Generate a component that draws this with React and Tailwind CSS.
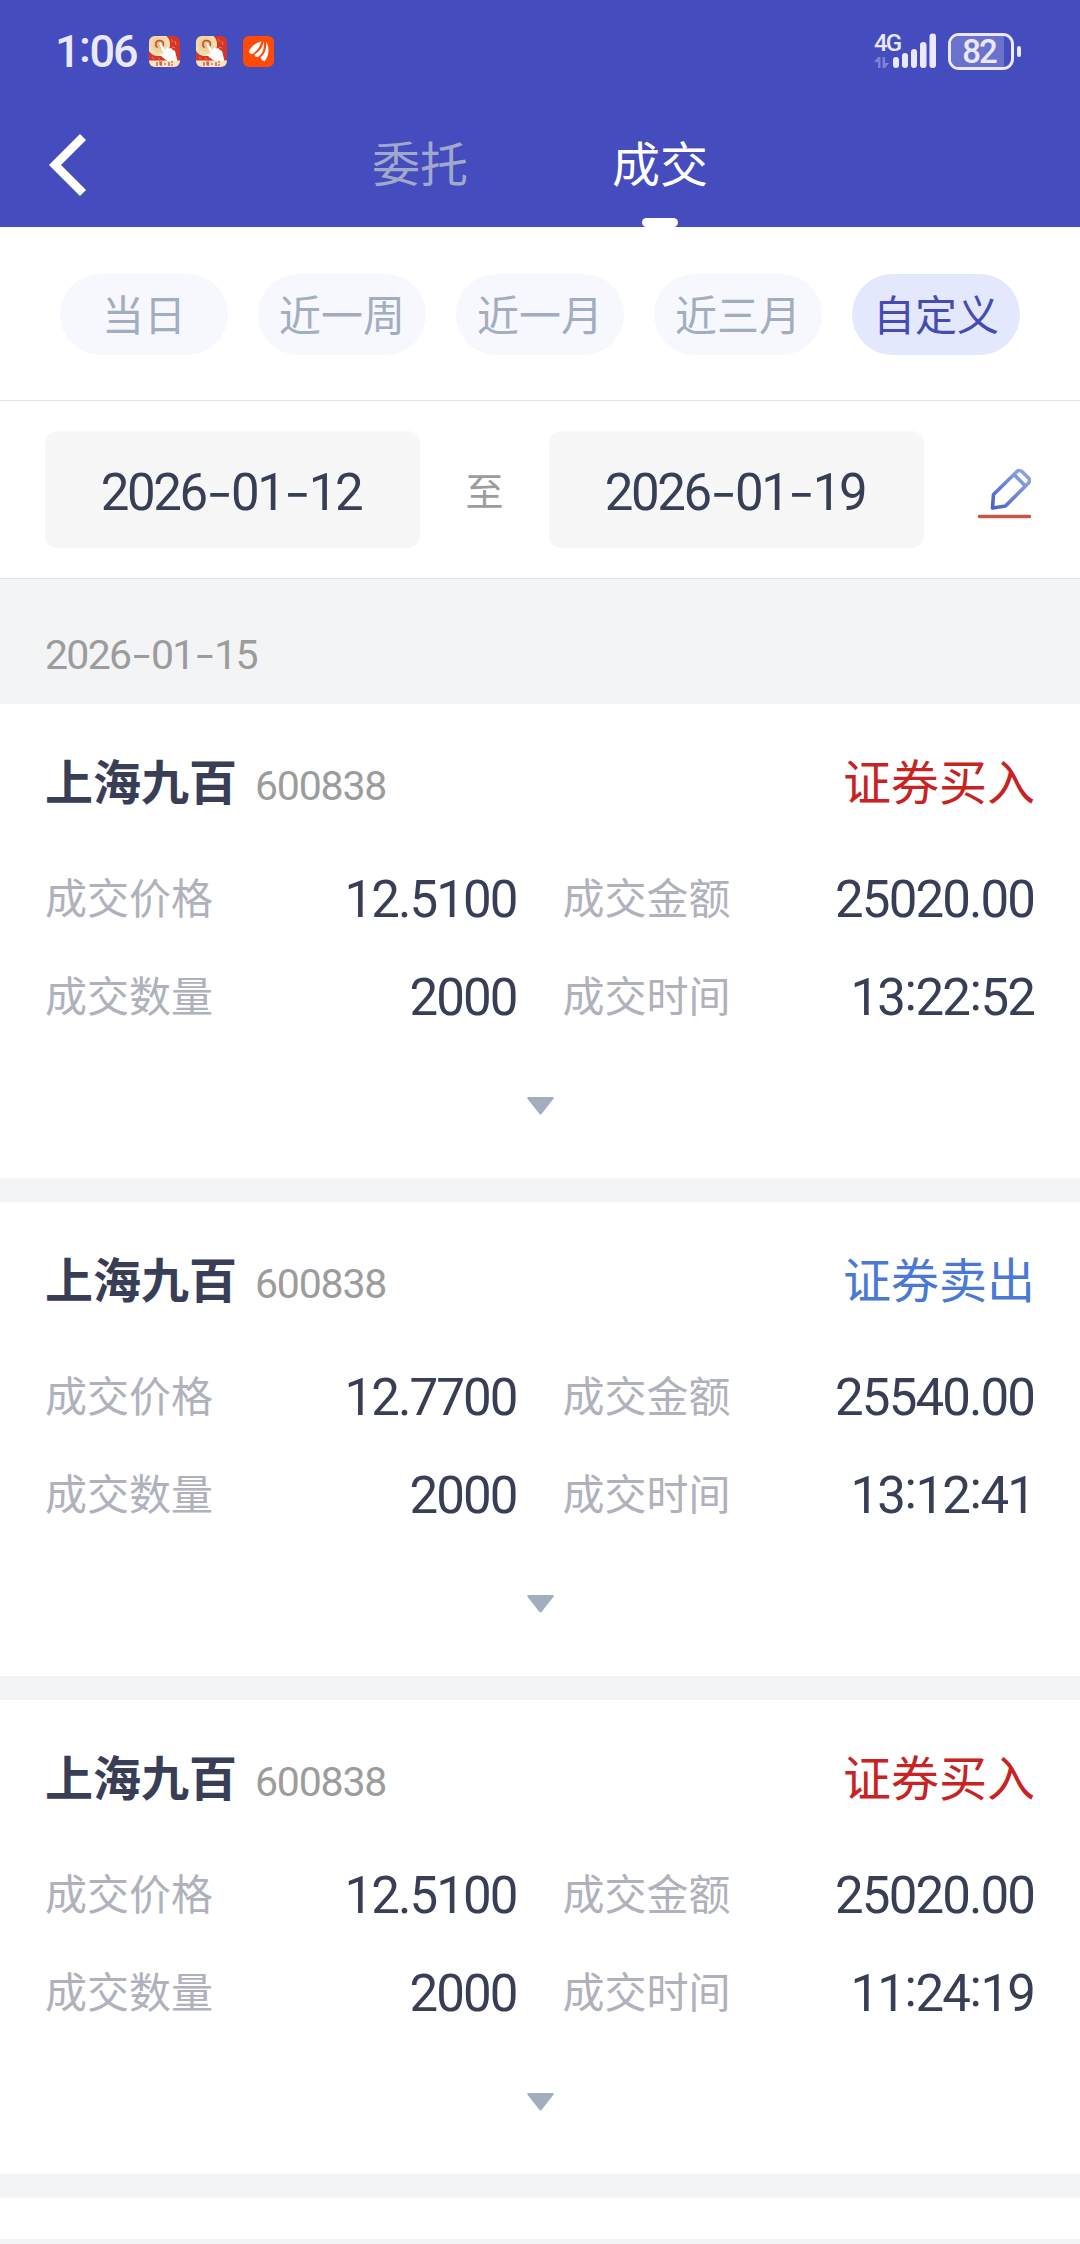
import clsx from 'clsx';

const RANGES = ['当日', '近一周', '近一月', '近三月', '自定义'];

const TRADES = [
  { name: '上海九百', code: '600838', side: 'buy', price: '12.5100', amount: '25020.00', qty: '2000', time: '13:22:52' },
  { name: '上海九百', code: '600838', side: 'sell', price: '12.7700', amount: '25540.00', qty: '2000', time: '13:12:41' },
  { name: '上海九百', code: '600838', side: 'buy', price: '12.5100', amount: '25020.00', qty: '2000', time: '11:24:19' },
];

// Digits in Roboto, with wide dashes and vertically centred colons.
function Num({ children, className }) {
  return (
    <span className={clsx("font-['Roboto',sans-serif] whitespace-nowrap", className)}>
      {children.split(/([-:])/).map((part, i) => {
        if (part === '-') {
          return <span key={i} className="relative top-[0.07em] font-['Inter',sans-serif] text-[1.2em] leading-none font-light">-</span>;
        }
        if (part === ':') return <span key={i} className="relative -top-[0.09em] mx-[0.5px]">:</span>;
        return part;
      })}
    </span>
  );
}

function PromoIcon() {
  return (
    <svg viewBox="0 0 31 31" className="size-[31px]">
      <defs>
        <clipPath id="promo-clip"><rect width="31" height="31" rx="6" /></clipPath>
        <radialGradient id="promo-gold">
          <stop offset="0" stopColor="#e3bd7a" />
          <stop offset="1" stopColor="#f8e6bd" />
        </radialGradient>
      </defs>
      <g clipPath="url(#promo-clip)">
        <rect width="31" height="31" fill="#d8352a" />
        <path d="M22 3l2 3M26 5l1 4M23 11l3 1M3 21l2 2M9 22l2 1" stroke="#ee7a52" />
        <circle cx="9.500" cy="8.500" r="11.500" fill="url(#promo-gold)" />
        <path d="M8.500 11.500C6 10 6 4.500 10.500 4.500S15 9 13.500 10.500" fill="none" stroke="#cf4030" strokeWidth="1.500" />
        <path d="M10 7.500q1.500-1.500 2.500.5l3.500 6 2-2.500 2.500 1 1.500-.5 2 2 2 1 2.500 10H18.500L13 21l-2-2.500 4-.5z" fill="#fff" />
        <rect y="24.500" width="31" height="6.500" fill="#f9e4c0" />
        <path d="M8 26v4M10 26h3M10 28h3M12 26v4M15 28h2M20 26v4M22 26h2M22 29h2" stroke="#c8402c" strokeWidth="1.200" />
      </g>
    </svg>
  );
}

function WingIcon() {
  return (
    <svg viewBox="0 0 31 31" className="size-[31px]">
      <rect width="31" height="31" rx="6" fill="#ff4a08" />
      <g fill="#fff">
        <path d="M18.500 5.500C14 7 8 9 6 15.500q.5 3 3.500 2.500C14 15 17 11 18.500 5.500z" />
        <path d="M20.500 5.500C20 11 16.500 15.500 11.500 18.500q.5 3 3.500 2.500C19.500 18 22 12 20.500 5.500z" />
        <path d="M23 5.500C24 12 22 17.500 17.500 21.500q1 3 4 4C26 20 27 12 23 5.500z" />
      </g>
    </svg>
  );
}

function Signal() {
  return (
    <div className="relative h-9 w-16">
      <span className="absolute top-0 left-0 font-['Roboto',sans-serif] text-[24px] leading-[20px] font-medium tracking-[-2px] text-[#e9e9fb]">4G</span>
      <svg viewBox="0 0 64 36" className="h-9 w-16" fill="#e9e9fb">
        <path d="M0 29l4-5h2.500v11H4v-6zM8.500 24H11v6h4l-4 5H8.500z" opacity=".35" />
        <rect x="19" y="24" width="6" height="11" rx="3" />
        <rect x="28" y="20" width="6" height="15" rx="3" />
        <rect x="37" y="16" width="6" height="19" rx="3" />
        <rect x="46" y="9" width="6.500" height="26" rx="3" />
        <rect x="55.500" y="0.500" width="6.500" height="34.500" rx="3" />
      </svg>
    </div>
  );
}

function Battery({ level }) {
  return (
    <div className="flex items-center gap-[3px]">
      <div className="relative flex h-[37px] w-[66px] items-center justify-center overflow-hidden rounded-[11px] border-3 border-[#e9e9fb]">
        <div className="absolute inset-y-0 left-0 bg-[#6b72cc]" style={{ width: `${level + 6}%` }} />
        <span className="relative right-[2px] font-['Roboto',sans-serif] text-[33px] leading-none font-medium tracking-[-2px] text-[#e9e9fb]">{level}</span>
      </div>
      <div className="h-[11px] w-1 rounded-full bg-[#e9e9fb]" />
    </div>
  );
}

function StatusBar() {
  return (
    <div className="flex h-[102px] items-center pr-[59px] pl-[55px]">
      <Num className="w-[94px] text-[45px] leading-none font-medium tracking-[-2px] text-[#e9e9fb]">1:06</Num>
      <div className="flex gap-4">
        <PromoIcon />
        <PromoIcon />
        <WingIcon />
      </div>
      <div className="ml-auto flex items-center gap-[10px]">
        <Signal />
        <Battery level={82} />
      </div>
    </div>
  );
}

function NavBar() {
  return (
    <div className="grid h-[125px] grid-cols-[300px_240px_240px] text-[48px]">
      <button className="flex items-center pl-[48px]" aria-label="返回">
        <svg viewBox="0 0 40 64" className="h-16 w-10" fill="none" stroke="#fff" strokeWidth="8.500">
          <path d="M35 4L7 32l28 28" />
        </svg>
      </button>
      <button className="flex items-center justify-center pb-2 text-[#a0a8cc]">委托</button>
      <button className="relative flex items-center justify-center pb-2 text-white">
        成交
        <span className="absolute bottom-0 h-[9px] w-9 rounded-full bg-white" />
      </button>
    </div>
  );
}

function EditIcon() {
  return (
    <svg viewBox="0 0 54 52" className="h-[52px] w-[54px]" fill="none" strokeLinecap="round" strokeLinejoin="round">
      <defs>
        <linearGradient id="pen" x1="1" y1="0" x2="0" y2="1">
          <stop offset="0" stopColor="#92aae6" />
          <stop offset="1" stopColor="#4a62c6" />
        </linearGradient>
      </defs>
      <path d="M15.500 40l1-13.500L40 3.500a3.500 3.500 0 0 1 5 0l6.500 6.500a3.500 3.500 0 0 1 0 5L28.500 38zM37.500 7l10 10" stroke="url(#pen)" strokeWidth="3.600" />
      <path d="M2.500 48.500h50" stroke="#cc5444" strokeWidth="3.500" />
    </svg>
  );
}

function DateField({ value }) {
  return (
    <div className="flex h-[117px] w-[375px] items-center justify-center rounded-xl bg-[#f7f7f8] pr-[3px] pb-[2px]">
      <Num className="text-[51px] tracking-[-2.400px] text-[#393e57]">{value}</Num>
    </div>
  );
}

function Field({ label, value }) {
  return (
    <div className="flex h-[98px] items-center justify-between">
      <span className="pb-[7px] text-[42px] text-[#afb1bc]">{label}</span>
      <Num className="mr-px text-[51px] tracking-[-1.900px] text-[#393e57]">{value}</Num>
    </div>
  );
}

function TradeCard({ trade }) {
  const buy = trade.side === 'buy';
  return (
    <section className="h-[474px] bg-white px-[45px] pt-[30px]">
      <div className="flex h-[96px] items-center">
        <h2 className="pb-[6px] text-[48px] font-bold text-[#393e57]">{trade.name}</h2>
        <Num className="ml-[18px] pt-[9px] text-[41px] tracking-[-1.200px] text-[#9c9c9c]">{trade.code}</Num>
        <span className={clsx('ml-auto pb-[6px] text-[48px]', buy ? 'text-[#c92222]' : 'text-[#4a78d6]')}>
          {buy ? '证券买入' : '证券卖出'}
        </span>
      </div>
      <div className="mt-5 grid grid-cols-2 gap-x-[45px]">
        <Field label="成交价格" value={trade.price} />
        <Field label="成交金额" value={trade.amount} />
        <Field label="成交数量" value={trade.qty} />
        <Field label="成交时间" value={trade.time} />
      </div>
      <svg viewBox="0 0 27 18" className="mx-auto mt-[51px] h-[18px] w-[27px]" fill="#a3adc0">
        <path d="M1.500 0h24q2 0 .8 2L14.500 17q-1 1.200-2 0L.7 2Q-.5 0 1.500 0z" />
      </svg>
    </section>
  );
}

export default function App() {
  return (
    <div className="flex h-[2244px] w-[1080px] flex-col overflow-hidden bg-[#f3f4f6] font-['Noto_Sans_CJK_SC',sans-serif] leading-none">
      <header className="bg-[#444cbe]">
        <StatusBar />
        <NavBar />
      </header>

      <div className="flex h-[174px] justify-between border-b border-[#e4e4e6] bg-white px-[60px] pt-[47px]">
        {RANGES.map((range) => (
          <button
            key={range}
            className={clsx(
              'flex h-[81px] w-[168px] items-center justify-center rounded-full pb-[4px] text-[42px]',
              range === '自定义' ? 'bg-[#e4e8fd] text-[#444cb4]' : 'bg-[#f6f8fd] text-[#a3adc0]',
            )}
          >
            {range}
          </button>
        ))}
      </div>

      <div className="flex h-[178px] items-center border-b border-[#e4e4e6] bg-white pl-[45px]">
        <DateField value="2026-01-12" />
        <span className="w-[129px] pb-[2px] text-center text-[38px] text-[#9c9c9c]">至</span>
        <DateField value="2026-01-19" />
        <button className="ml-[53px] pt-2" aria-label="编辑">
          <EditIcon />
        </button>
      </div>

      <div className="flex h-[125px] items-end pb-[28px] pl-[45px]">
        <Num className="text-[41px] tracking-[-1.700px] text-[#9c9c9c]">2026-01-15</Num>
      </div>

      <main className="flex flex-col gap-6">
        {TRADES.map((trade) => (
          <TradeCard key={trade.time} trade={trade} />
        ))}
        <div className="h-[41px] bg-white" />
      </main>
    </div>
  );
}
